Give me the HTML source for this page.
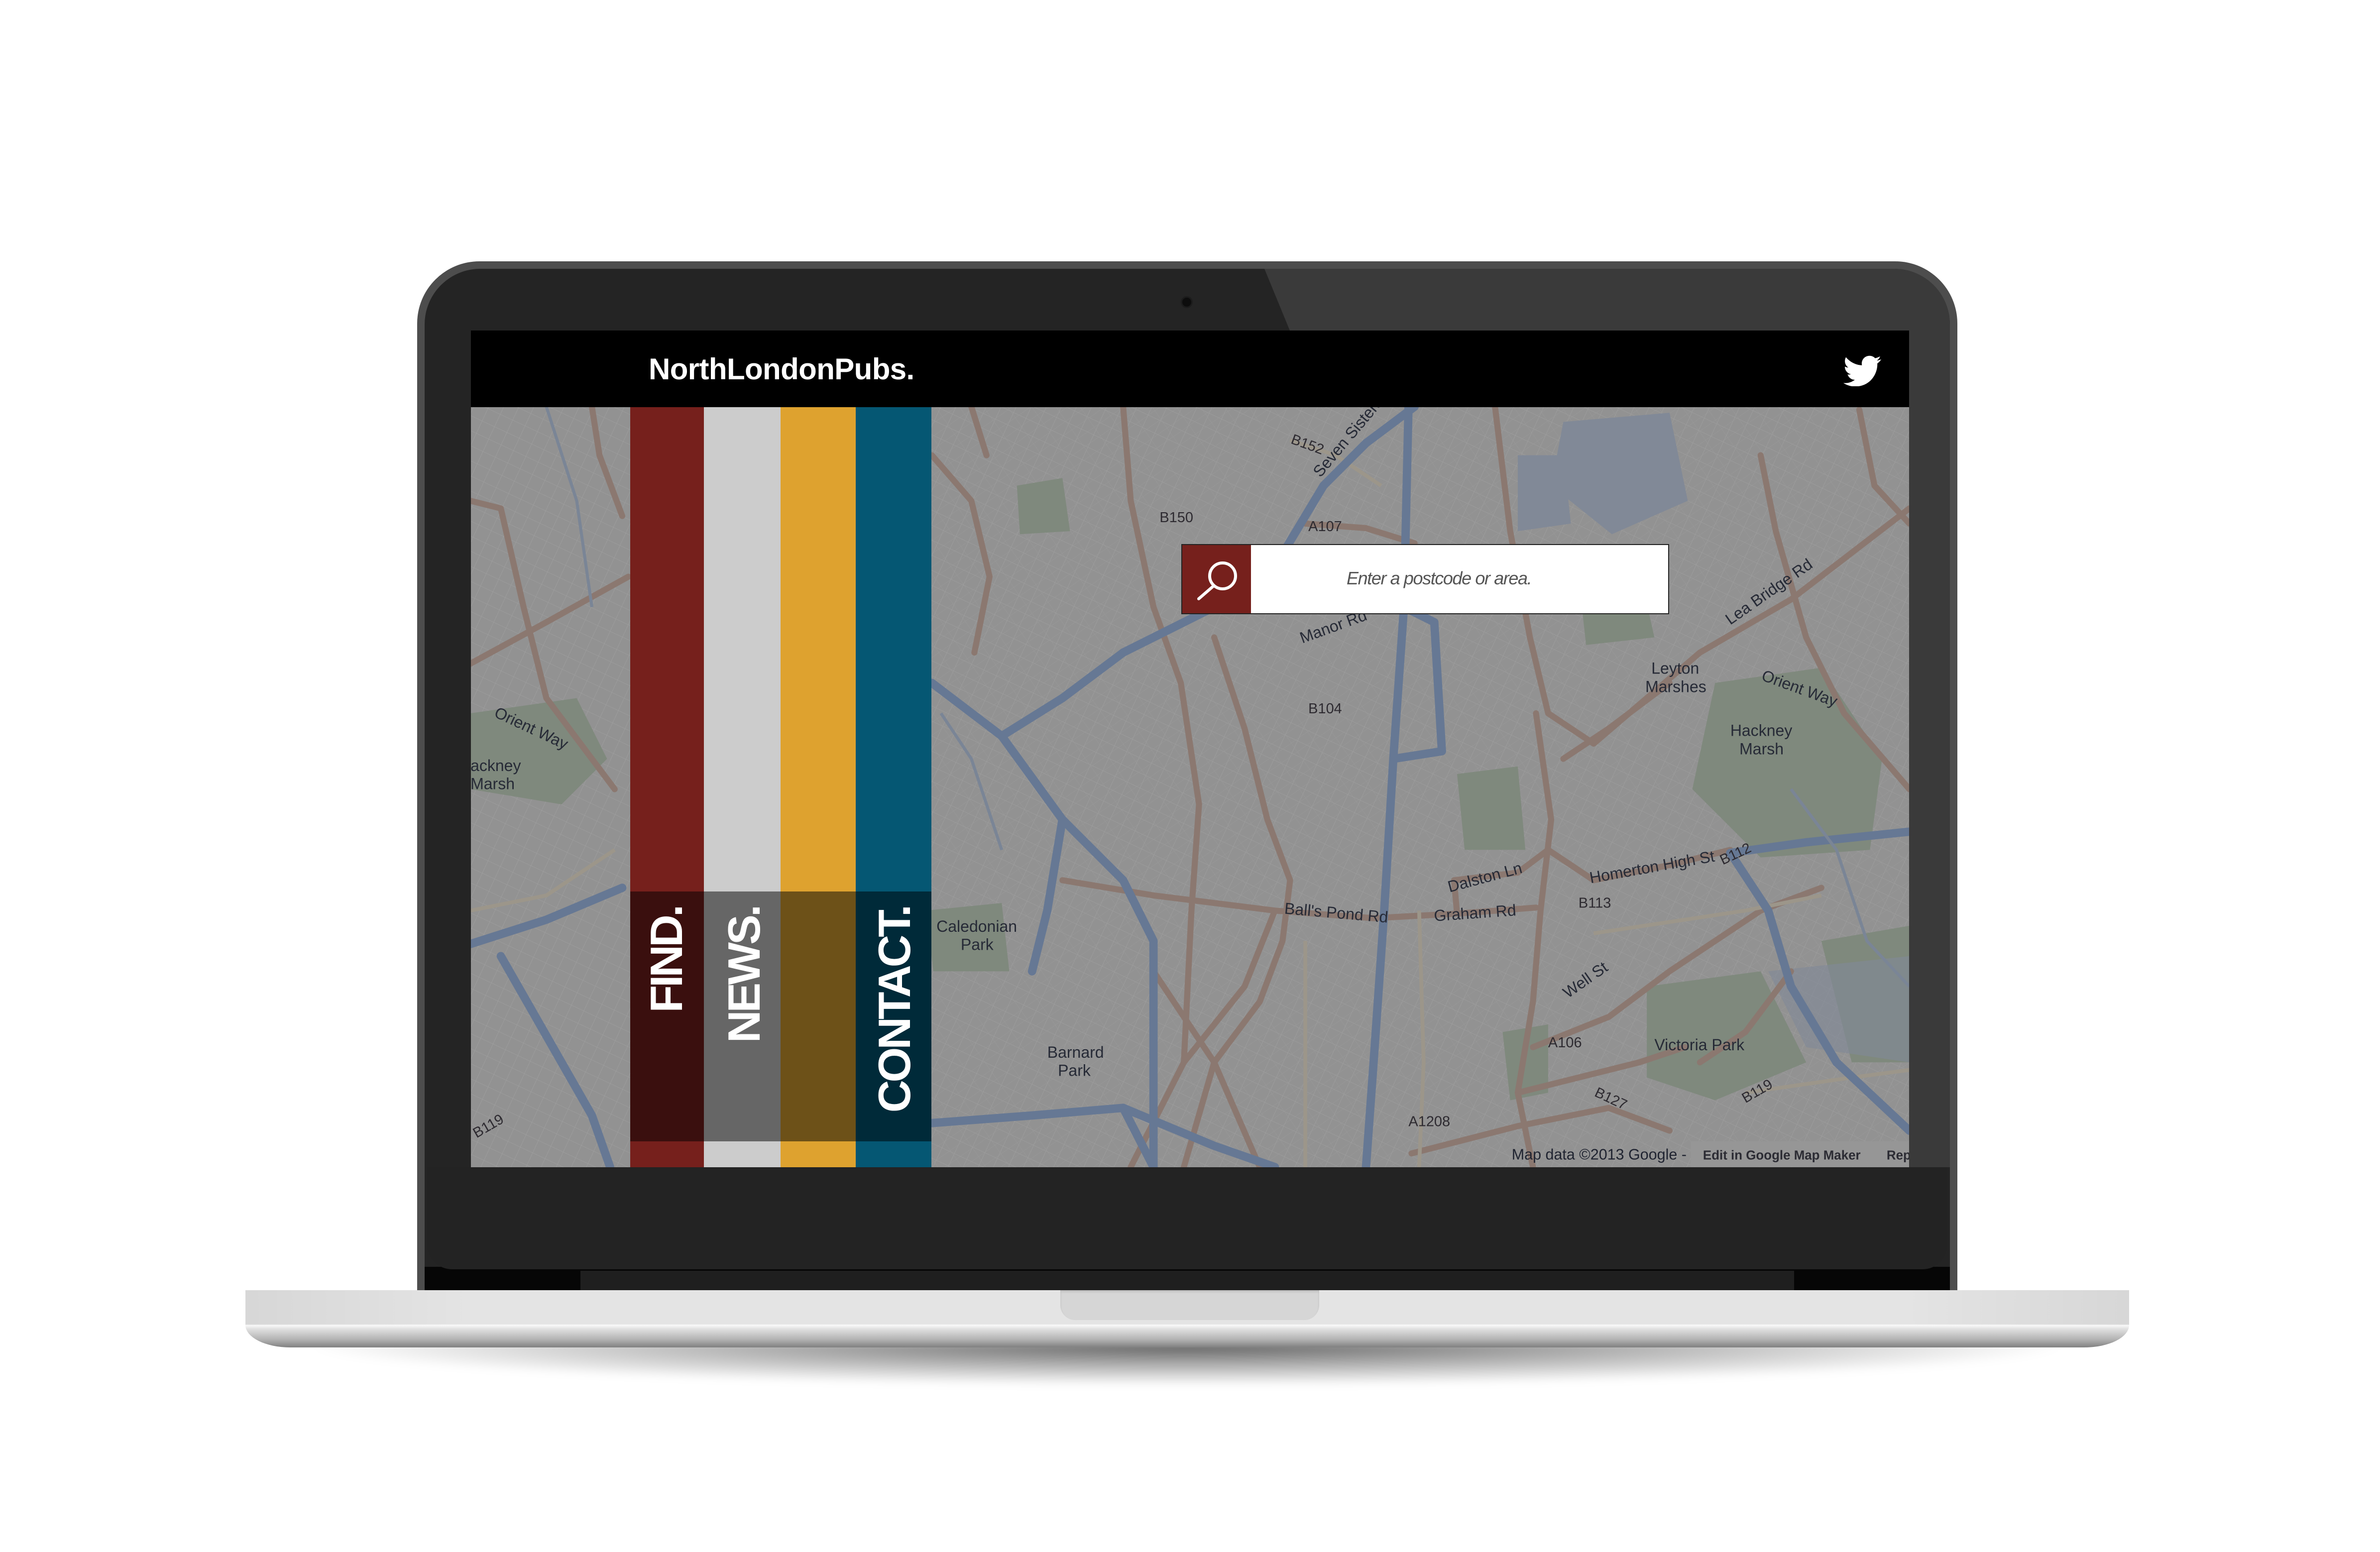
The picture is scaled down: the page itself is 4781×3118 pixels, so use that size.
<!DOCTYPE html>
<html><head><meta charset="utf-8"><style>
*{margin:0;padding:0;box-sizing:border-box}
html,body{width:4781px;height:3118px;background:#fff;overflow:hidden;position:relative;font-family:"Liberation Sans",Arial,sans-serif}
.a{position:absolute}
</style></head><body>

<!-- shadow under base -->
<div class="a" style="left:600px;top:2695px;width:3570px;height:90px;background:radial-gradient(ellipse at 50% 10%,rgba(0,0,0,.6) 0%,rgba(0,0,0,.3) 35%,rgba(0,0,0,0) 70%);filter:blur(8px)"></div>

<!-- lid outer -->
<div class="a" style="left:838px;top:525px;width:3094px;height:2090px;background:#4d4d4d;border-radius:125px 125px 0 0"></div>
<div class="a" style="left:853px;top:540px;width:3064px;height:2070px;background:#242424;border-radius:112px 112px 0 0;overflow:hidden">
  <div class="a" style="left:0;top:0;width:3064px;height:1805px;background:#3a3a3a;clip-path:polygon(1687px 0,3064px 0,3064px 1805px,1738px 1805px,1738px 124px)"></div>
</div>
<!-- black hinge strip -->
<div class="a" style="left:853px;top:2545px;width:3064px;height:60px;background:#060606"></div>
<div class="a" style="left:1166px;top:2553px;width:2438px;height:45px;background:#1f1f1f"></div>
<!-- chin -->
<div class="a" style="left:858px;top:2345px;width:3054px;height:205px;background:#232323;border-radius:0 0 50px 50px"></div>

<!-- camera -->
<div class="a" style="left:2375px;top:598px;width:18px;height:18px;border-radius:50%;background:#0d0d0d;box-shadow:0 0 0 3px #1c1c1c"></div>

<!-- screen: map -->
<svg class="a" style="left:946px;top:818px" width="2889" height="1527" viewBox="310.3 268.3 947.5 500.8" preserveAspectRatio="none">
<defs>
<pattern id="st" width="9" height="9" patternUnits="userSpaceOnUse" patternTransform="rotate(25)">
<path d="M0 0H9M0 0V9" stroke="#9e9e9e" stroke-width=".5" fill="none"/></pattern>
<pattern id="st2" width="13" height="7" patternUnits="userSpaceOnUse" patternTransform="rotate(-35)">
<path d="M0 0H13M0 0V7" stroke="#9b9b9b" stroke-width=".4" fill="none"/></pattern>
</defs>
<rect x="300" y="260" width="970" height="520" fill="#929292"/>
<rect x="300" y="260" width="970" height="520" fill="url(#st)"/>
<rect x="600" y="260" width="670" height="520" fill="url(#st2)" opacity=".8"/>
<g fill="#7f897d">
<path d="M1130 450L1200 440L1240 500L1232 560L1160 565L1115 520Z"/>
<path d="M1085 650L1160 640L1190 700L1130 725L1085 710Z"/>
<path d="M310 470L380 460L400 500L370 530L310 520Z"/>
<path d="M670 320L700 315L705 350L672 352Z"/>
<path d="M960 510L1000 505L1005 560L965 560Z"/>
<path d="M1040 380L1080 375L1090 420L1045 425Z"/>
<path d="M610 600L660 595L665 640L615 640Z"/>
<path d="M1200 620L1258 610L1258 700L1220 700Z"/>
<path d="M990 680L1020 675L1020 720L995 725Z"/>
</g>
<g fill="#818997">
<path d="M1030 278L1100 272L1112 330L1062 352L1022 320Z"/>
<path d="M1000 300L1030 300L1035 345L1000 350Z"/>
<path d="M1165 640L1258 630L1258 700L1190 690Z" opacity=".6"/>
</g>
<g fill="none" stroke="#8b7870" stroke-width="4" stroke-linecap="round" stroke-linejoin="round">
<path d="M740 268L745 330L760 400L778 450L790 530L785 600L780 700"/>
<path d="M800 420L820 480L835 540L850 580L845 620L830 660L800 700L780 769"/>
<path d="M700 580L760 590L840 600L905 605L960 602L1012 598"/>
<path d="M960 602L958 580L1000 575L1020 560L1050 580L1100 570L1140 560"/>
<path d="M1012 470L1022 540L1015 600L1010 660L1000 720L1010 769"/>
<path d="M985 268L995 350L1008 420L1020 470L1050 490L1120 430L1180 395L1258 335"/>
<path d="M1160 300L1170 350L1190 420L1215 470L1258 520"/>
<path d="M1010 690L1060 670L1100 640L1160 600L1200 585"/>
<path d="M930 760L1000 742L1060 730L1100 745"/>
<path d="M760 640L800 700L830 769"/>
<path d="M840 600L820 650L780 700L745 769"/>
<path d="M860 345L900 348L932 358"/>
<path d="M614 300L640 330L652 380L642 430"/>
<path d="M640 268L650 300"/>
<path d="M1000 720L1080 700L1110 690"/>
<path d="M1180 640L1150 680L1120 700"/>
<path d="M310 330L330 335L345 400L360 460L405 520"/>
<path d="M305 440L360 410L414 380"/>
<path d="M390 268L395 300L410 340"/>
<path d="M1100 450L1060 480L1030 500"/>
<path d="M1225 270L1235 320L1258 345"/>
</g>
<g fill="none" stroke="#9c968a" stroke-width="2.5">
<path d="M850 290L880 300L910 320"/>
<path d="M935 600L938 700L935 769"/>
<path d="M860 620L860 769"/>
<path d="M1050 615L1150 600L1200 590"/>
<path d="M1150 720L1220 710L1258 705"/>
<path d="M310 600L360 590L405 560"/>
</g>
<g fill="none" stroke="#667894" stroke-width="5.5" stroke-linecap="round" stroke-linejoin="round">
<path d="M928 268L925 400L918 500L912 600L905 700L900 769"/>
<path d="M925 400L945 410L950 495L918 500"/>
<path d="M932 268L900 292L872 320L842 370L800 400L740 430"/>
<path d="M740 430L700 460L660 485L614 450"/>
<path d="M660 485L700 540L740 580L760 620L760 769"/>
<path d="M614 740L680 735L740 730L800 755L840 769"/>
<path d="M700 540L690 600L680 640"/>
<path d="M1140 562L1190 555L1258 548"/>
<path d="M1140 562L1165 600L1180 650L1210 700L1258 745"/>
<path d="M310 622L360 606L410 585"/>
<path d="M330 630L350 665L390 735L402 769"/>
<path d="M740 730L760 769"/>
</g>
<g fill="none" stroke="#7a8596" stroke-width="2">
<path d="M360 268L380 330L390 400"/>
<path d="M1180 520L1210 560L1230 620L1258 650"/>
<path d="M620 470L640 500L660 560"/>
</g>
<g fill="#262a36" font-family="Liberation Sans,Arial,sans-serif" font-size="10.5">
<text x="1088" y="444">Leyton</text><text x="1084" y="456">Marshes</text>
<text x="1140" y="485">Hackney</text><text x="1146" y="497">Marsh</text>
<text x="1090" y="692">Victoria Park</text>
<text x="617" y="614">Caledonian</text><text x="633" y="626">Park</text>
<text x="690" y="697">Barnard</text><text x="697" y="709">Park</text>
<text x="310" y="508">ackney</text><text x="310" y="520">Marsh</text>
<text x="945" y="607" transform="rotate(-4 945 607)">Graham Rd</text>
<text x="846" y="602" transform="rotate(5 846 602)">Ball's Pond Rd</text>
<text x="1048" y="582" transform="rotate(-10 1048 582)">Homerton High St</text>
<text x="955" y="588" transform="rotate(-15 955 588)">Dalston Ln</text>
<text x="1160" y="448" transform="rotate(20 1160 448)">Orient Way</text>
<text x="325" y="472" transform="rotate(25 325 472)">Orient Way</text>
<text x="1140" y="412" transform="rotate(-35 1140 412)">Lea Bridge Rd</text>
<text x="858" y="424" transform="rotate(-20 858 424)">Manor Rd</text>
<text x="870" y="315" transform="rotate(-50 870 315)">Seven Sisters Rd</text>
<text x="1033" y="658" transform="rotate(-35 1033 658)">Well St</text>
<text x="996" y="764" fill="#1f2330" font-size="10">Map data ©2013 Google -</text>
</g>
<g fill="#2d2a30" font-family="Liberation Sans,Arial,sans-serif" font-size="9.5">
<text x="862" y="470">B104</text><text x="850" y="292" transform="rotate(20 850 292)">B152</text>
<text x="764" y="344">B150</text><text x="862" y="350">A107</text>
<text x="1040" y="598">B113</text><text x="1135" y="570" transform="rotate(-25 1135 570)">B112</text>
<text x="1020" y="690">A106</text><text x="928" y="742">A1208</text>
<text x="1050" y="722" transform="rotate(25 1050 722)">B127</text>
<text x="1150" y="727" transform="rotate(-30 1150 727)">B119</text>
<text x="314" y="750" transform="rotate(-30 314 750)">B119</text>
</g>
<rect x="1114" y="752" width="144" height="17" fill="#969696"/>
<g fill="#2b2b33" font-family="Liberation Sans,Arial,sans-serif" font-size="8.5" font-weight="bold">
<text x="1122" y="764">Edit in Google Map Maker</text><text x="1243" y="764">Rep</text></g>
</svg>

<!-- header -->
<div class="a" style="left:946px;top:664px;width:2889px;height:154px;background:#000"></div>
<div class="a" style="left:1303px;top:702px;font-size:60px;font-weight:bold;color:#fff;letter-spacing:-0.6px;line-height:80px">NorthLondonPubs.</div>
<svg class="a" style="left:3703px;top:712px" width="76" height="64" viewBox="0 1.5 24 20"><path fill="#fff" d="M23.954 4.569c-.885.389-1.83.654-2.825.775 1.014-.611 1.794-1.574 2.163-2.723-.951.555-2.005.959-3.127 1.184-.896-.959-2.173-1.559-3.591-1.559-2.717 0-4.92 2.203-4.92 4.917 0 .39.045.765.127 1.124C7.691 8.094 4.066 6.13 1.64 3.161c-.427.722-.666 1.561-.666 2.475 0 1.710.87 3.213 2.188 4.096-.807-.026-1.566-.248-2.228-.616v.061c0 2.385 1.693 4.374 3.946 4.827-.413.111-.849.171-1.296.171-.314 0-.615-.03-.916-.086.631 1.953 2.445 3.377 4.604 3.417-1.68 1.319-3.809 2.105-6.102 2.105-.39 0-.779-.023-1.170-.067 2.189 1.394 4.768 2.209 7.557 2.209 9.054 0 13.999-7.496 13.999-13.986 0-.209 0-.42-.015-.63.961-.689 1.8-1.56 2.46-2.548l-.047-.02z"/></svg>

<!-- stripes -->
<div class="a" style="left:1266px;top:818px;width:148px;height:1527px;background:#76201c"></div>
<div class="a" style="left:1414px;top:818px;width:154px;height:1527px;background:#cccccc"></div>
<div class="a" style="left:1568px;top:818px;width:151px;height:1527px;background:#dea22f"></div>
<div class="a" style="left:1719px;top:818px;width:152px;height:1527px;background:#055773"></div>
<div class="a" style="left:1266px;top:1791px;width:148px;height:502px;background:#3a0f0e"></div>
<div class="a" style="left:1414px;top:1791px;width:154px;height:502px;background:#666666"></div>
<div class="a" style="left:1568px;top:1791px;width:151px;height:502px;background:#6d5118"></div>
<div class="a" style="left:1719px;top:1791px;width:152px;height:502px;background:#002a39"></div>

<div class="a" style="left:1290px;top:1822px;width:100px;line-height:100px;writing-mode:vertical-rl;transform:rotate(180deg);font-size:91px;font-weight:bold;color:#fff;letter-spacing:-5px">FIND.</div>
<div class="a" style="left:1446px;top:1822px;width:100px;line-height:100px;writing-mode:vertical-rl;transform:rotate(180deg);font-size:91px;font-weight:bold;color:#fff;letter-spacing:-5px">NEWS.</div>
<div class="a" style="left:1748px;top:1822px;width:100px;line-height:100px;writing-mode:vertical-rl;transform:rotate(180deg);font-size:91px;font-weight:bold;color:#fff;letter-spacing:-5px">CONTACT.</div>

<!-- search -->
<div class="a" style="left:2373px;top:1093px;width:980px;height:141px;background:#222"></div>
<div class="a" style="left:2375px;top:1095px;width:138px;height:137px;background:#76201c"></div>
<div class="a" style="left:2513px;top:1095px;width:838px;height:137px;background:#fff"></div>
<svg class="a" style="left:2375px;top:1095px" width="138" height="137" viewBox="0 0 138 137"><circle cx="81" cy="62" r="26" fill="none" stroke="#fff" stroke-width="6"/><path d="M63 82L33 108" stroke="#fff" stroke-width="6" stroke-linecap="round"/></svg>
<div class="a" style="left:2705px;top:1140px;font-size:36px;font-style:italic;color:#555;letter-spacing:-1.4px;line-height:44px">Enter a postcode or area.</div>

<!-- base -->
<div class="a" style="left:493px;top:2592px;width:3784px;height:115px;border-radius:0 0 90px 90px/0 0 45px 45px;background:linear-gradient(#e4e4e4 0,#e4e4e4 68px,#fafafa 70px,#e0e0e0 78px,#b0b0b0 100px,#808080 115px)"></div>
<div class="a" style="left:493px;top:2592px;width:3784px;height:70px;background:linear-gradient(90deg,rgba(0,0,0,.06),rgba(0,0,0,0) 12%,rgba(0,0,0,0) 88%,rgba(0,0,0,.06))"></div>
<div class="a" style="left:2130px;top:2592px;width:520px;height:60px;background:#d6d6d6;border-radius:0 0 30px 30px;box-shadow:inset 0 3px 4px rgba(0,0,0,.12)"></div>

</body></html>
